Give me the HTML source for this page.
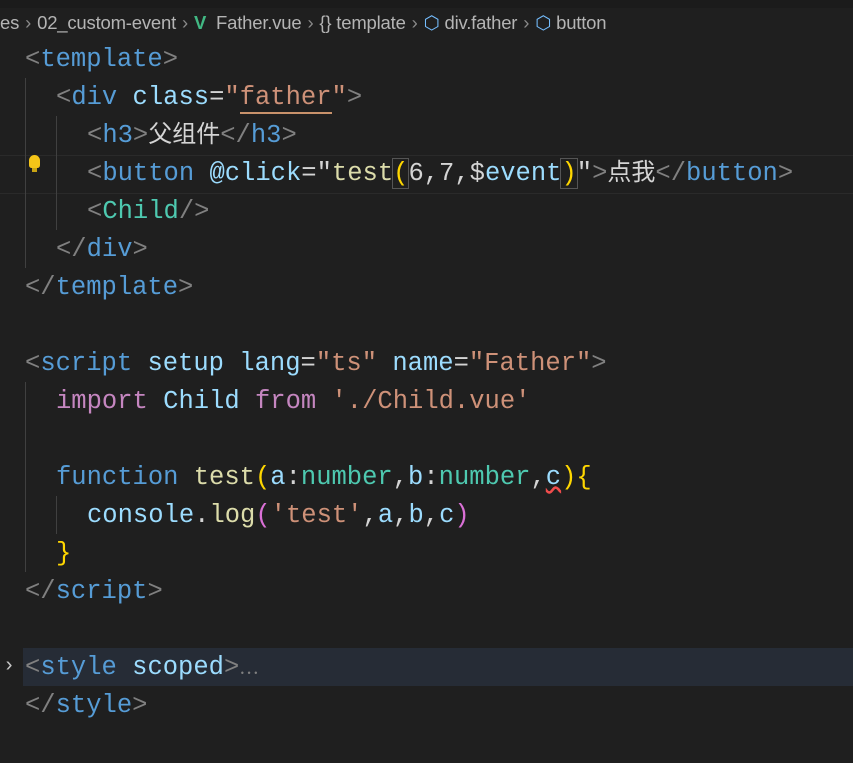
<!DOCTYPE html>
<html><head><meta charset="utf-8"><style>
body{margin:0;width:853px;height:763px;background:#1f1f1f;overflow:hidden;position:relative;font-family:"Liberation Mono","Noto Sans CJK SC",monospace;}
.top{position:absolute;left:0;top:0;width:853px;height:8px;background:#1b1b1b}
.bc{position:absolute;top:12px;left:0;height:24px;font:18.5px "Liberation Sans","Noto Sans CJK SC",sans-serif;color:#b4b4b4;white-space:nowrap;letter-spacing:-0.2px}
.bc .s{color:#8a8a8a;margin:0 6px}
.l{position:absolute;left:0;height:38px;line-height:38px;font-size:25.5px;white-space:pre;color:#d4d4d4}
.g{color:#808080}.t{color:#569cd6}.a{color:#9cdcfe}.s{color:#ce9178}.y{color:#ffd700}.f{color:#dcdcaa}.k{color:#c586c0}.n{color:#4ec9b0}.p{color:#da70d6}.w{color:#d4d4d4}
.guide{position:absolute;width:1px;background:#404040}
.cj{font-family:"Noto Sans CJK SC",sans-serif;font-size:24px;line-height:0}
</style></head><body>
<div class="top"></div>
<div class="bc">es<span class="s">›</span>02_custom-event<span class="s">›</span><span style="color:#41b883;font-weight:bold">V</span>&nbsp; Father.vue<span class="s">›</span>{} template<span class="s">›</span><span style="color:#75beff">⬡</span> div.father<span class="s">›</span><span style="color:#75beff">⬡</span> button</div>
<div style="position:absolute;left:0;top:155px;width:853px;height:37px;border-top:1px solid #2a2a2a;border-bottom:1px solid #2a2a2a"></div>
<div style="position:absolute;left:23px;top:648px;width:830px;height:38px;background:#262c36"></div>
<div class="guide" style="left:25px;top:78px;height:190px"></div>
<div class="guide" style="left:56px;top:116px;height:114px"></div>
<div class="guide" style="left:25px;top:382px;height:190px"></div>
<div class="guide" style="left:56px;top:496px;height:38px"></div>
<div style="position:absolute;left:29px;top:155px;width:11px;height:13px;background:#f5c518;border-radius:6px 6px 3px 3px"></div>
<div style="position:absolute;left:32px;top:168px;width:5px;height:4px;background:#c9a414"></div>

<div class="l" style="top:41px;left:25px"><span class="g">&lt;</span><span class="t">template</span><span class="g">&gt;</span></div>
<div class="l" style="top:79px;left:56px"><span class="g">&lt;</span><span class="t">div</span> <span class="a">class</span>=<span class="s">"<span style="border-bottom:2px solid #c9926b">father</span>"</span><span class="g">&gt;</span></div>
<div class="l" style="top:117px;left:87px"><span class="g">&lt;</span><span class="t">h3</span><span class="g">&gt;</span><span class="cj">父组件</span><span class="g">&lt;/</span><span class="t">h3</span><span class="g">&gt;</span></div>
<div class="l" style="top:155px;left:87px"><span class="g">&lt;</span><span class="t">button</span> <span class="a">@click</span>=<span class="w">"</span><span class="f">test</span><span class="y" style="outline:1px solid #555">(</span>6,7,$<span class="a">event</span><span class="y" style="outline:1px solid #555">)</span>"<span class="g">&gt;</span><span class="cj">点我</span><span class="g">&lt;/</span><span class="t">button</span><span class="g">&gt;</span></div>
<div class="l" style="top:193px;left:87px"><span class="g">&lt;</span><span class="n">Child</span><span class="g">/&gt;</span></div>
<div class="l" style="top:231px;left:56px"><span class="g">&lt;/</span><span class="t">div</span><span class="g">&gt;</span></div>
<div class="l" style="top:269px;left:25px"><span class="g">&lt;/</span><span class="t">template</span><span class="g">&gt;</span></div>
<div class="l" style="top:345px;left:25px"><span class="g">&lt;</span><span class="t">script</span> <span class="a">setup</span> <span class="a">lang</span>=<span class="s">"ts"</span> <span class="a">name</span>=<span class="s">"Father"</span><span class="g">&gt;</span></div>
<div class="l" style="top:383px;left:56px"><span class="k">import</span> <span class="a">Child</span> <span class="k">from</span> <span class="s">'./Child.vue'</span></div>
<div class="l" style="top:459px;left:56px"><span class="t">function</span> <span class="f">test</span><span class="y">(</span><span class="a">a</span>:<span class="n">number</span>,<span class="a">b</span>:<span class="n">number</span>,<span class="a" style="text-decoration:underline wavy #f14c4c">c</span><span class="y">){</span></div>
<div class="l" style="top:497px;left:87px"><span class="a">console</span>.<span class="f">log</span><span class="p">(</span><span class="s">'test'</span>,<span class="a">a</span>,<span class="a">b</span>,<span class="a">c</span><span class="p">)</span></div>
<div class="l" style="top:535px;left:56px"><span class="y">}</span></div>
<div class="l" style="top:573px;left:25px"><span class="g">&lt;/</span><span class="t">script</span><span class="g">&gt;</span></div>
<div class="l" style="top:648px;left:3px;color:#c5c5c5;font-size:20px">›</div>
<div class="l" style="top:649px;left:25px"><span class="g">&lt;</span><span class="t">style</span> <span class="a">scoped</span><span class="g">&gt;</span><span class="g" style="font-size:18px">⋯</span></div>
<div class="l" style="top:687px;left:25px"><span class="g">&lt;/</span><span class="t">style</span><span class="g">&gt;</span></div>
</body></html>
